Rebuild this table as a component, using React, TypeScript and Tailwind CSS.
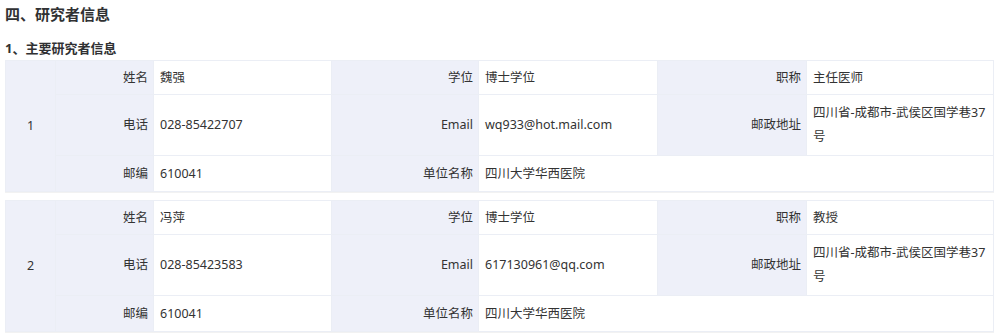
import React from 'react';

interface Researcher {
  name: string;
  degree: string;
  title: string;
  phone: string;
  email: string;
  address: string;
  zip: string;
  org: string;
}

const researchers: Researcher[] = [
  {
    name: '魏强',
    degree: '博士学位',
    title: '主任医师',
    phone: '028-85422707',
    email: 'wq933@hot.mail.com',
    address: '四川省-成都市-武侯区国学巷37号',
    zip: '610041',
    org: '四川大学华西医院',
  },
  {
    name: '冯萍',
    degree: '博士学位',
    title: '教授',
    phone: '028-85423583',
    email: '617130961@qq.com',
    address: '四川省-成都市-武侯区国学巷37号',
    zip: '610041',
    org: '四川大学华西医院',
  },
];

const labelCls = 'border border-[#ebeef5] bg-[#eef0f9] text-right pl-[6px] pr-[5px] py-[4px] text-[#333]';
const valueCls = 'border border-[#ebeef5] bg-white text-left pl-[6px] pr-[2px] py-[4px] text-[#333] break-all';

function ResearcherTable({ index, r }: { index: number; r: Researcher }) {
  return (
    <table className="w-[988px] table-fixed border-collapse border border-[#e6e8ee] text-[12.5px] leading-[24px] shadow-[0_1px_0_#f2f2f2]">
      <colgroup>
        <col className="w-[50px]" />
        <col className="w-[98px]" />
        <col className="w-[178px]" />
        <col className="w-[147px]" />
        <col className="w-[179px]" />
        <col className="w-[149px]" />
        <col className="w-[187px]" />
      </colgroup>
      <tbody>
        <tr className="h-[34px]">
          <td rowSpan={3} className="border border-[#ebeef5] bg-[#eef0f9] text-center text-[#333]">
            {index}
          </td>
          <td className={labelCls}>姓名</td>
          <td className={valueCls}>{r.name}</td>
          <td className={labelCls}>学位</td>
          <td className={valueCls}>{r.degree}</td>
          <td className={labelCls}>职称</td>
          <td className={valueCls}>{r.title}</td>
        </tr>
        <tr className="h-[61px]">
          <td className={labelCls}>电话</td>
          <td className={valueCls}>{r.phone}</td>
          <td className={labelCls}>Email</td>
          <td className={valueCls}>{r.email}</td>
          <td className={labelCls}>邮政地址</td>
          <td className={valueCls}>{r.address}</td>
        </tr>
        <tr className="h-[36px]">
          <td className={labelCls}>邮编</td>
          <td className={valueCls}>{r.zip}</td>
          <td className={labelCls}>单位名称</td>
          <td colSpan={3} className={valueCls}>{r.org}</td>
        </tr>
      </tbody>
    </table>
  );
}

export default function App() {
  return (
    <div className="w-[999px] h-[333px] overflow-hidden bg-white px-[5px] font-['Noto_Sans','Noto_Sans_CJK_SC',sans-serif] text-[#333]">
      <h2 className="pt-[4px] text-[15px] font-bold leading-[20px] text-[#303133]">四、研究者信息</h2>
      <h3 className="mt-[15px] text-[13px] font-bold leading-[18px] text-[#303133]">1、主要研究者信息</h3>
      <div className="mt-[3px] flex flex-col gap-[8px]">
        {researchers.map((r, i) => (
          <ResearcherTable key={i} index={i + 1} r={r} />
        ))}
      </div>
    </div>
  );
}
